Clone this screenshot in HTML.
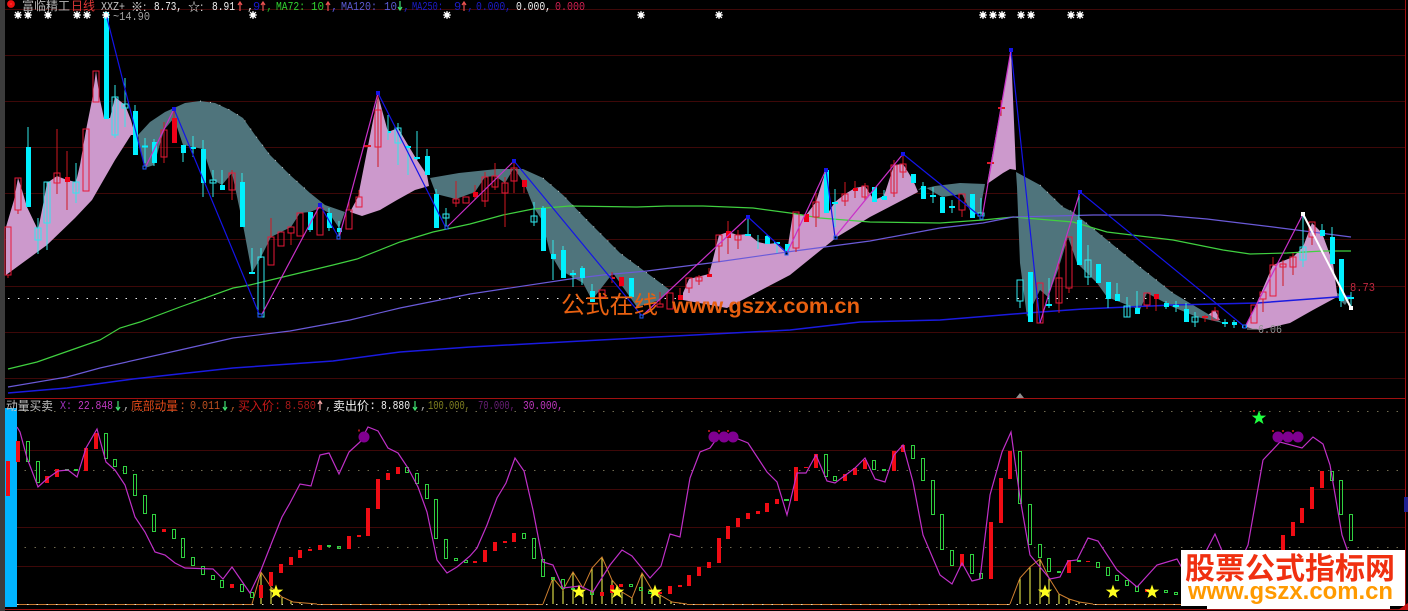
<!DOCTYPE html>
<html><head><meta charset="utf-8"><style>
html,body{margin:0;padding:0;background:#000;width:1408px;height:611px;overflow:hidden}
svg{display:block}
text{font-family:"Liberation Mono","WenQuanYi Zen Hei","Noto Sans CJK SC",monospace;font-size:12px}
.c{font-family:"Liberation Sans","WenQuanYi Zen Hei","Noto Sans CJK SC",sans-serif;font-size:12px}
</style></head><body>
<svg width="1408" height="611" viewBox="0 0 1408 611" xmlns="http://www.w3.org/2000/svg">
<defs>
<polygon id="s" points="0,-7.5 1.8,-2.4 7.2,-2.4 2.9,0.9 4.5,6 0,3 -4.5,6 -2.9,0.9 -7.2,-2.4 -1.8,-2.4"/>
<g id="w"><circle r="2.6" fill="#fff"/><path d="M0-4V4M-4 0H4M-3-3L3 3M-3 3L3-3" stroke="#fff" stroke-width="1.1" fill="none"/></g>
</defs>
<rect width="1408" height="611" fill="#000"/>
<rect x="0" y="0" width="5" height="611" fill="#3c3c3c"/>
<!-- grid -->
<g stroke="#3e0808" stroke-width="1" shape-rendering="crispEdges">
<path d="M5 9.5H1405M5 55.5H1405M5 101.5H1405M5 147.5H1405M5 193.5H1405M5 239.5H1405M5 286.5H1405M5 332.5H1405M5 378.5H1405"/>
<path d="M5 450.5H1405M5 489.5H1405M5 527.5H1405M5 566.5H1405"/>
</g>
<path d="M8 298.5H1350" stroke="#e8e8e8" stroke-dasharray="1.5 8.3" fill="none" shape-rendering="crispEdges"/>
<path d="M5 411.5H1405M5 470.5H1405M5 547.5H1405" stroke="#706a50" stroke-dasharray="1.5 8.3" fill="none" shape-rendering="crispEdges"/>
<path d="M5 398.5H1405M5 609.5H1405M1405.5 0V610" stroke="#a01010" fill="none" stroke-width="1.2" shape-rendering="crispEdges"/>
<rect x="1404" y="497" width="4" height="15" fill="#202090"/>
<!-- pink fills -->
<g fill="#cc99cc">
<polygon points="6,275 6,227 14,200 18,178 22,190 27,207 38,230 43,205 47,183 57,176 67,180 76,182 80,165 86,130 92,100 96,71 100,100 104,118 110,118 115,97 125,105 131,120 135,135 131,135 115,160 92,200 75,218 47,245"/>
<polygon points="350,212 358,197 368,146 378,95 388,132 398,128 408,145 417,160 427,175 429,186 415,190 397,200 380,210 362,216"/>
<polygon points="683,293 689,279 709,274 712,263 719,235 728,232 738,235 748,234 758,242 767,244 777,243 787,252 793,213 806,215 816,202 826,170 828,213 835,202 845,194 855,188 865,186 874,200 884,196 894,165 903,164 913,180 918,192 870,217 837,237 790,275 727,308 683,300"/>
<polygon points="987,184 1011,50 1016,170 1010,169 1003,173"/>
<polygon points="1205,317 1215,310 1220,320 1212,320"/>
<polygon points="1245,327 1255,307 1273,265 1293,257 1303,247 1312,223 1322,233 1333,263 1337,293 1337,297 1313,310 1290,323 1260,330"/>
</g>
<!-- teal fills -->
<g fill="#4f747c">
<polygon points="138,135 150,122 165,112 174,108 185,103 200,101 215,103 230,110 243,118 255,135 270,155 290,175 310,193 325,205 345,212 339,228 329,213 320,208 310,212 300,213 291,227 281,232 271,237 261,257 252,273 243,225 232,173 222,185 213,180 203,149 193,147 183,145 174,118 164,130 154,165 145,168 140,150"/>
<polygon points="430,178 459,173 497,169 523,169 543,178 563,195 587,220 620,253 670,290 660,300 637,307 613,273 592,300 583,283 560,270 550,253 542,220 534,208 525,185 514,168 505,183 495,176 485,177 475,192 456,199 436,194"/>
<polygon points="918,190 935,186 960,183 985,184 982,200 981,213 972,215 962,194 942,197 923,186"/>
<polygon points="1016,172 1040,185 1063,207 1073,212 1140,267 1173,293 1223,323 1197,317 1173,307 1147,293 1140,310 1107,297 1097,283 1077,263 1068,237 1058,270 1048,297 1040,290 1027,317 1020,263 1017,187"/>
<polygon points="1337,293 1350,298 1345,305 1337,297"/>
</g>
<path d="M200 101L215 103L230 110L243 118L255 135L270 155L290 175L310 193M543 178L563 195L587 220L620 253L670 290M1040 185L1063 207L1073 212L1140 267L1173 293" fill="none" stroke="#e8e8e8" stroke-width="1" stroke-dasharray="1 9" opacity=".8"/>
<!-- MAs -->
<g fill="none" stroke-width="1.2">
<polyline stroke="#40d040" points="8,369 37,362 77,348 100,340 120,328 140,322 180,307 233,288 250,285 283,277 333,265 357,259 400,242 433,232 470,224 503,215 533,209 570,206 637,207 667,206 703,206 753,208 790,213 820,218 870,222 940,223 983,220 1013,217 1073,222 1107,232 1173,240 1223,250 1250,254 1287,253 1323,251 1351,251"/>
<polyline stroke="#6a5ad8" points="8,387 67,377 100,368 180,350 233,338 290,331 350,320 400,308 470,294 570,279 603,275 647,271 710,263 787,252 870,241 940,228 983,223 1013,217 1093,215 1160,215 1207,219 1273,227 1351,237"/>
<polyline stroke="#1a1ae0" stroke-width="1.5" points="8,393 67,388 133,379 233,368 333,361 400,352 470,347 600,340 790,330 860,322 940,320 1027,313 1083,309 1173,305 1257,303 1337,297 1351,296"/>
</g>
<!-- cyan wicks -->
<path stroke="#30e8e8" fill="none" shape-rendering="crispEdges" d="M28 127V150M38 218V254M47 182V250M76 163V203M115 85V138M125 78V127M135 105V112M145 138V163M154 139V166M183 150V162M193 136V157M203 140V197M213 170V197M222 170V186M242 173V183M252 248V273M261 248V258M310 230V232M329 208V231M339 221V238M388 115V140M398 123V165M408 145V175M417 131V160M427 149V157M436 189V195M446 208V228M534 202V226M543 206V209M553 240V280M563 246V251M573 270V287M582 266V285M592 284V292M748 218V236M758 235V249M767 235V237M777 242V253M835 189V227M884 190V197M923 182V187M933 187V203M952 200V213M981 198V217M1020 301V308M1049 278V308M1079 193V221M1088 245V285M1108 299V308M1117 283V295M1127 297V317M1137 291V309M1166 301V309M1176 301V312M1186 303V310M1195 312V327M1225 319V327M1234 320V328M1303 214V267M1322 224V231M1332 227V238M1341 301V307M1351 292V308"/>
<!-- cyan bodies filled -->
<path stroke="#00f0ff" fill="none" stroke-width="5" shape-rendering="crispEdges" d="M28.5 147V207M106.5 12V119M135.5 111V155M154.5 142V163M183.5 145V153M203.5 149V183M222.5 185V190M242.5 182V227M310.5 212V230M329.5 213V228M339.5 228V232M427.5 156V175M436.5 194V228M543.5 208V251M553.5 254V259M563.5 250V278M582.5 268V278M592.5 291V302M631.5 278V297M767.5 236V244M787.5 244V251M826.5 170V213M874.5 187V202M884.5 196V200M913.5 174V183M923.5 186V199M942.5 197V213M972.5 194V218M1030.5 272V322M1079.5 220V265M1098.5 264V283M1108.5 282V299M1117.5 294V301M1137.5 308V314M1166.5 303V307M1186.5 309V322M1234.5 322V325M1244.5 325V328M1322.5 230V236M1332.5 237V264M1341.5 259V301"/>
<path stroke="#00f0ff" fill="none" stroke-width="2" shape-rendering="crispEdges" d="M142 146.500H148M190 148H196M249 273H255M388 132H391M405 147H411M414 158H420M570 274H576M745 235H751M774 243H780M832 203H838M881 198H887M930 196H936M949 207H955M1046 305H1052M1173 306H1179M1222 323H1228M1345 298H1354"/>
<!-- cyan outlined -->
<path stroke="#30e8f0" fill="none" shape-rendering="crispEdges" d="M35 228h6v12h-6zM44 182h6v41h-6zM73 182h6v11h-6zM112 97h6v38h-6zM122 104h6v4h-6zM210 180h6v3h-6zM258 257h6v60h-6zM395 128h6v15h-6zM443 214h6v4h-6zM531 216h6v6h-6zM978 213h6v3h-6zM1017 280h6v21h-6zM1085 260h6v17h-6zM1124 306h6v11h-6zM1192 317h6v5h-6zM1300 247h6v13h-6z"/>
<!-- red wicks -->
<path stroke="#d01820" fill="none" shape-rendering="crispEdges" d="M8 275V278M18 210V214M57 129V194M67 151V210M164 122V163M174 108V118M232 170V200M271 218V237M291 233V245M349 200V210M359 190V197M378 93V167M456 181V207M475 185V200M485 172V207M495 163V190M505 177V227M514 160V193M524 187V193M612 272V283M660 292V304M680 288V295M689 288V293M699 275V285M709 268V274M719 246V262M728 221V254M738 230V249M796 248V252M816 193V227M845 182V206M855 181V198M865 183V200M894 160V197M903 155V178M962 210V217M1001 100V116M1059 263V313M1069 288V293M1147 305V309M1156 299V311M1205 315V322M1215 307V311M1263 299V312M1273 257V265M1283 260V286M1293 253V275M1312 237V245"/>
<!-- red filled -->
<path stroke="#f00018" fill="none" stroke-width="5" shape-rendering="crispEdges" d="M67.500 177V182M174.500 118V143M475.500 192V197M524.500 180V187M621.500 277V286M680.500 295V300M709.500 274V277M728.500 231V238M806.500 214V222M855.500 188V191M1156.500 294V299"/>
<path stroke="#e01828" stroke-width="2" fill="none" shape-rendering="crispEdges" d="M364 146H371M987 163H994M998 108H1005M612 278H615M1202 317H1208"/>
<!-- red outlined -->
<path stroke="#e81838" fill="none" shape-rendering="crispEdges" d="M5 227h6v48h-6zM15 178h6v32h-6zM54 173h6v10h-6zM83 129h6v62h-6zM93 71h6v31h-6zM161 130h6v27h-6zM229 173h6v17h-6zM268 237h6v28h-6zM278 232h6v14h-6zM288 227h6v6h-6zM297 213h6v23h-6zM317 208h6v27h-6zM346 210h6v19h-6zM356 197h6v10h-6zM375 110h6v37h-6zM453 199h6v4h-6zM463 197h6v6h-6zM482 177h6v24h-6zM492 176h6v11h-6zM502 183h6v10h-6zM511 168h6v13h-6zM599 290h6v7h-6zM657 304h6v3h-6zM667 293h6v16h-6zM686 278h6v10h-6zM696 277h6v4h-6zM716 235h6v11h-6zM735 235h6v5h-6zM793 212h6v36h-6zM813 202h6v15h-6zM842 194h6v7h-6zM862 186h6v11h-6zM891 165h6v28h-6zM900 164h6v8h-6zM959 194h6v16h-6zM1037 283h6v40h-6zM1056 278h6v25h-6zM1066 237h6v51h-6zM1144 293h6v12h-6zM1212 311h6v9h-6zM1251 305h6v18h-6zM1260 292h6v7h-6zM1270 265h6v31h-6zM1280 264h6v3h-6zM1290 257h6v10h-6zM1309 222h6v15h-6z"/>
<!-- zigzag -->
<g fill="none" stroke-width="1.2">
<path stroke="#1414e8" d="M106 14L145 168M174 109L260 316M320 205L339 238M378 93L446 228M514 161L642 316M748 217L787 253M826 170L835 237M903 154L981 217M1011 50L1040 323M1080 192L1245 327"/>
<path stroke="#c830c8" d="M145 168L174 109M261 316L320 205M339 238L378 93M446 228L514 161M642 316L748 217M787 253L826 170M835 237L903 154M982 218L1011 50M1040 323L1080 192M1245 327L1303 214"/>
<path stroke="#fff" stroke-width="2" d="M1303 214L1351 308"/>
</g>
<g fill="#1414e8" shape-rendering="crispEdges">
<rect x="172" y="107" width="4" height="4"/><rect x="376" y="91" width="4" height="4"/><rect x="512" y="159" width="4" height="4"/><rect x="746" y="215" width="4" height="4"/><rect x="824" y="168" width="4" height="4"/><rect x="901" y="152" width="4" height="4"/><rect x="1009" y="48" width="4" height="4"/><rect x="1078" y="190" width="4" height="4"/><rect x="318" y="203" width="4" height="4"/>
</g>
<g fill="#000" stroke="#2060ff" shape-rendering="crispEdges">
<rect x="143" y="166" width="3" height="3"/><rect x="258" y="314" width="4" height="3"/><rect x="337" y="236" width="3" height="3"/><rect x="445" y="226" width="3" height="3"/><rect x="640" y="315" width="3" height="3"/><rect x="785" y="252" width="3" height="3"/><rect x="834" y="236" width="3" height="3"/><rect x="980" y="216" width="3" height="3"/><rect x="1243" y="325" width="3" height="3"/>
</g>
<rect x="1301" y="212" width="4" height="4" fill="#fff"/><rect x="1349" y="306" width="4" height="4" fill="#fff"/>
<!-- white markers -->
<use href="#w" x="18" y="15"/><use href="#w" x="28" y="15"/><use href="#w" x="48" y="15"/><use href="#w" x="77" y="15"/><use href="#w" x="87" y="15"/><use href="#w" x="106" y="15"/><use href="#w" x="253" y="15"/><use href="#w" x="447" y="15"/><use href="#w" x="641" y="15"/><use href="#w" x="719" y="15"/><use href="#w" x="983" y="15"/><use href="#w" x="993" y="15"/><use href="#w" x="1002" y="15"/><use href="#w" x="1021" y="15"/><use href="#w" x="1031" y="15"/><use href="#w" x="1071" y="15"/><use href="#w" x="1080" y="15"/>
<!-- top header -->
<circle cx="11" cy="4" r="2.2" fill="#ff9090" stroke="#f01010" stroke-width="3.4"/>
<text class="c" x="22" y="10" fill="#b8b8b8" textLength="48" lengthAdjust="spacingAndGlyphs">富临精工</text>
<text class="c" x="71" y="10" fill="#e03838" textLength="24" lengthAdjust="spacingAndGlyphs">日线</text>
<text x="101" y="10" fill="#c0c0c0" textLength="24" lengthAdjust="spacingAndGlyphs">XXZ+</text>
<text class="c" x="131" y="11" fill="#e8e8e8">※:</text>
<text x="154" y="10" fill="#f0f0f0" textLength="28" lengthAdjust="spacingAndGlyphs">8.73,</text>
<text class="c" x="188" y="11" fill="#e8e8e8">☆:</text>
<text x="212" y="10" fill="#f0f0f0" textLength="23" lengthAdjust="spacingAndGlyphs">8.91</text>
<text x="247" y="10" fill="#d0d0d0">,</text>
<text x="253" y="10" fill="#1818d0">9</text><text x="266" y="10" fill="#20a020">,</text>
<text x="276" y="10" fill="#30d030" textLength="29" lengthAdjust="spacingAndGlyphs">MA72:</text>
<text x="311" y="10" fill="#30d030" textLength="13" lengthAdjust="spacingAndGlyphs">10</text><text x="331" y="10" fill="#5050c8">,</text>
<text x="341" y="10" fill="#5a5ad0" textLength="36" lengthAdjust="spacingAndGlyphs">MA120:</text>
<text x="384" y="10" fill="#5a5ad0" textLength="13" lengthAdjust="spacingAndGlyphs">10</text><text x="403" y="10" fill="#2020b0">,</text>
<text x="412" y="10" fill="#1c1cc8" textLength="31" lengthAdjust="spacingAndGlyphs">MA250:</text>
<text x="454" y="10" fill="#1c1cc8">9</text><text x="467" y="10" fill="#1818a0">,</text>
<text x="476" y="10" fill="#1c1cc8" textLength="35" lengthAdjust="spacingAndGlyphs">0.000,</text>
<text x="516" y="10" fill="#f0f0f0" textLength="35" lengthAdjust="spacingAndGlyphs">0.000,</text>
<text x="555" y="10" fill="#d02050" textLength="30" lengthAdjust="spacingAndGlyphs">0.000</text>
<g fill="none" stroke-width="1.2">
<path stroke="#e85050" d="M240 11V2M238 5L240 2L242 5M263 11V2M261 5L263 2L265 5M328 11V2M326 5L328 2L330 5M464 11V2M462 5L464 2L466 5"/>
<path stroke="#40e070" d="M400 1V10M398 7L400 10L402 7"/>
<path stroke="#f0a0a0" d="M320 410V401M318 404L320 401L322 404"/>
<path stroke="#40e070" d="M118 401V410M116 407L118 410L120 407M225 401V410M223 407L225 410L227 407M415 401V410M413 407L415 410L417 407"/>
</g>
<text x="113" y="20" fill="#a0a0a0" textLength="37" lengthAdjust="spacingAndGlyphs">~14.90</text>
<text x="1350" y="291" fill="#c02840" textLength="25" lengthAdjust="spacingAndGlyphs">8.73</text>
<path d="M1247 329H1257" stroke="#a0a0a0"/>
<text x="1258" y="333" fill="#909090" textLength="24" lengthAdjust="spacingAndGlyphs">6.06</text>
<polygon points="1020,393 1024,398 1016,398" fill="#909090"/>
<!-- watermark -->
<text class="c" x="561" y="313" style="font-size:24px" fill="#e86010" textLength="97" lengthAdjust="spacingAndGlyphs">公式在线</text>
<text x="672" y="313" style="font:bold 21.500px 'Liberation Sans',sans-serif" fill="#e86010" textLength="188" lengthAdjust="spacingAndGlyphs">www.gszx.com.cn</text>
<!-- lower panel -->
<rect x="5" y="408" width="12" height="199" fill="#00b4ff"/>
<path d="M17 604.500H252M317 604.500H543M687 604.500H1010M1093 604.500H1200" stroke="#c87830" fill="none" shape-rendering="crispEdges"/>
<path d="M17 604.500H1200" stroke="#e8e0c0" stroke-dasharray="1.5 8.3" fill="none" shape-rendering="crispEdges"/>
<text class="c" x="6" y="410" fill="#c0c0c0" textLength="47" lengthAdjust="spacingAndGlyphs">动量买卖</text>
<text x="60" y="409" fill="#a030c0" textLength="12" lengthAdjust="spacingAndGlyphs">X:</text>
<text x="78" y="409" fill="#c038c0" textLength="35" lengthAdjust="spacingAndGlyphs">22.848</text>
<text x="123" y="409" fill="#a0a0a0">,</text>
<text class="c" x="131" y="410" fill="#e04818" textLength="47" lengthAdjust="spacingAndGlyphs">底部动量</text><text x="179" y="409" fill="#c04820">:</text>
<text x="190" y="409" fill="#c05020" textLength="30" lengthAdjust="spacingAndGlyphs">0.011</text>
<text x="230" y="409" fill="#a05020">,</text>
<text class="c" x="238" y="410" fill="#c81818" textLength="36" lengthAdjust="spacingAndGlyphs">买入价</text><text x="274" y="409" fill="#b01010">:</text>
<text x="285" y="409" fill="#a81818" textLength="31" lengthAdjust="spacingAndGlyphs">8.580</text>
<text x="325" y="409" fill="#a0a0a0">,</text>
<text class="c" x="333" y="410" fill="#f0f0f0" textLength="36" lengthAdjust="spacingAndGlyphs">卖出价</text><text x="369" y="409" fill="#e0e0e0">:</text>
<text x="381" y="409" fill="#f0f0f0" textLength="29" lengthAdjust="spacingAndGlyphs">8.880</text>
<text x="420" y="409" fill="#a0a0a0">,</text>
<text x="428" y="409" fill="#808020" textLength="42" lengthAdjust="spacingAndGlyphs">100.000,</text>
<text x="478" y="409" fill="#6a1f78" textLength="37" lengthAdjust="spacingAndGlyphs">70.000,</text>
<text x="523" y="409" fill="#c038c0" textLength="40" lengthAdjust="spacingAndGlyphs">30.000,</text>
<!-- yellow vertical bars -->
<path stroke="#ffff50" fill="none" shape-rendering="crispEdges" d="M261 572V604M271 587V604M282 597V604M291 601V604M300 603V604M553 578V604M563 590V604M573 572V604M583 590V604M592 568V604M602 557V604M612 580V604M622 592V604M632 598V604M642 573V604M652 590V604M660 595V604M671 601V604M680 603V604M1020 578V604M1030 567V604M1040 559V604M1049 578V604M1059 594V604M1069 599V604M1079 602V604"/>
<path stroke="#d08030" fill="none" d="M252 604L261 572L271 587L282 597L293 602L317 604M543 604L553 578L563 590L573 572L583 588L592 568L602 557L612 580L622 592L632 598L642 573L652 590L660 595L672 602L687 604M1010 604L1020 578L1030 567L1040 559L1049 578L1059 594L1069 599L1079 602L1093 604"/>
<!-- lower red bodies -->
<path stroke="#f00c14" stroke-width="4" fill="none" shape-rendering="crispEdges" d="M8 461V496M18 441V462M47 476V483M57 469V477M86 448V471M96 433V449M164 529V532M232 584V588M261 585V598M271 572V586M281 564V573M291 557V565M300 550V558M310 549V551M320 545V550M349 536V549M359 535V537M368 508V536M378 479V509M388 473V480M398 467V474M475 561V563M485 550V562M495 542V551M505 541V543M514 533V542M602 592V596M612 585V593M621 584V587M660 592V594M670 586V594M680 585V587M689 575V586M699 567V576M709 562V568M719 538V563M728 526V539M738 518V527M748 513V519M758 511V514M767 503V512M777 499V504M796 467V501M806 467V468M816 454V468M845 474V481M855 468V475M865 460V469M894 451V471M903 445V452M962 554V566M991 522V579M1001 478V523M1010 451V479M1069 560V573M1088 561V562M1147 589V592M1283 535V552M1293 522V536M1302 508V523M1312 487V509M1322 471V488"/>
<!-- lower green bodies -->
<path stroke="#30d040" fill="none" shape-rendering="crispEdges" d="M26.500 441.500h3v20h-3zM36.500 461.500h3v21h-3zM104.500 433.500h3v25h-3zM113.500 459.500h3v7h-3zM123.500 466.500h3v7h-3zM133.500 474.500h3v21h-3zM143.500 495.500h3v18h-3zM152.500 514.500h3v17h-3zM172.500 529.500h3v9h-3zM181.500 538.500h3v19h-3zM191.500 557.500h3v8h-3zM201.500 566.500h3v8h-3zM211.500 575.500h3v4h-3zM220.500 580.500h3v7h-3zM240.500 584.500h3v7h-3zM250.500 592.500h3v5h-3zM337.500 546.500h3v2h-3zM405.500 467.500h3v5h-3zM415.500 473.500h3v10h-3zM425.500 484.500h3v14h-3zM434.500 499.500h3v39h-3zM444.500 539.500h3v19h-3zM454.500 558.500h3v2h-3zM464.500 560.500h3v2h-3zM522.500 533.500h3v5h-3zM532.500 538.500h3v20h-3zM541.500 559.500h3v17h-3zM551.500 577.500h3v2h-3zM561.500 579.500h3v9h-3zM571.500 588.500h3v1h-3zM590.500 591.500h3v3h-3zM629.500 584.500h3v2h-3zM639.500 587.500h3v3h-3zM648.500 591.500h3v2h-3zM824.500 454.500h3v22h-3zM833.500 476.500h3v4h-3zM872.500 460.500h3v9h-3zM911.500 445.500h3v13h-3zM921.500 458.500h3v22h-3zM931.500 480.500h3v34h-3zM940.500 514.500h3v35h-3zM950.500 550.500h3v15h-3zM970.500 554.500h3v19h-3zM979.500 573.500h3v5h-3zM1018.500 451.500h3v52h-3zM1028.500 504.500h3v40h-3zM1038.500 544.500h3v13h-3zM1047.500 558.500h3v13h-3zM1096.500 562.500h3v5h-3zM1106.500 567.500h3v8h-3zM1115.500 575.500h3v5h-3zM1125.500 580.500h3v5h-3zM1135.500 586.500h3v5h-3zM1164.500 590.500h3v2h-3zM1174.500 592.500h3v2h-3zM1330.500 471.500h3v9h-3zM1339.500 480.500h3v34h-3zM1349.500 514.500h3v26h-3z"/>
<path stroke="#30d040" stroke-width="2" fill="none" shape-rendering="crispEdges" d="M65 470H69M74 470H78M327 546H331M784 500H789M882 470H886M1057 572H1061M1077 561H1081"/>
<!-- X line -->
<polyline fill="none" stroke="#c030c8" stroke-width="1.2" points="17,427 20,432 27,458 38,487 48,478 58,471 68,470 77,477 86,448 97,429 106,462 115,470 125,485 135,517 145,532 155,552 165,555 175,563 185,568 213,569 223,579 232,567 250,593 261,570 272,542 282,517 290,503 300,484 311,486 320,455 329,453 339,474 349,452 360,442 368,427 378,431 388,448 398,453 408,468 418,487 427,512 437,560 447,573 457,567 470,556 477,548 487,525 497,498 506,483 515,458 524,471 533,510 543,562 553,565 563,588 580,586 593,592 610,565 622,550 632,556 650,578 661,566 670,534 680,537 690,478 700,452 710,448 718,437 738,439 748,443 767,472 777,482 787,515 797,473 806,473 816,455 827,481 835,483 855,468 865,458 875,479 885,482 894,455 903,445 913,482 923,535 940,575 952,584 962,563 972,581 980,579 990,495 1002,452 1011,432 1020,498 1030,555 1050,579 1060,577 1068,561 1077,560 1088,538 1098,541 1117,570 1137,587 1157,565 1177,559 1190,582 1215,534 1233,577 1248,545 1263,460 1280,442 1302,448 1313,437 1323,444 1330,465 1342,535 1348,552 1356,580"/>
<!-- circles -->
<g fill="#800090">
<circle cx="364" cy="437" r="5.500"/><circle cx="714" cy="437" r="5.500"/><circle cx="724" cy="437" r="5.500"/><circle cx="733" cy="437" r="5.500"/><circle cx="1278" cy="437" r="5.500"/><circle cx="1288" cy="437" r="5.500"/><circle cx="1298" cy="437" r="5.500"/>
</g>
<path stroke="#a01818" stroke-width="2" fill="none" shape-rendering="crispEdges" d="M358 430.500h2M708 431h2M718 431h2M727 431h2M1272 431h2M1282 431h2M1292 431h2M1253 411h2"/>
<!-- stars -->
<g fill="#ffff20">
<use href="#s" x="276" y="592"/><use href="#s" x="579" y="592"/><use href="#s" x="617" y="592"/><use href="#s" x="655" y="592"/><use href="#s" x="1045" y="592"/><use href="#s" x="1113" y="592"/><use href="#s" x="1152" y="592"/>
</g>
<use href="#s" x="1259" y="418" fill="#20ff40"/>
<!-- corner logo -->
<rect x="1181" y="550" width="224" height="56" fill="#fff"/>
<rect x="1207" y="606" width="183" height="3" fill="#fff"/>
<polygon points="1408,603 1408,610 1398,610" fill="#c01010"/>
<text x="1185" y="579" style="font:bold 30px 'Noto Sans CJK SC','WenQuanYi Zen Hei',sans-serif" fill="#f03010" textLength="210" lengthAdjust="spacingAndGlyphs">股票公式指标网</text>
<text x="1188" y="599" style="font:bold 24px 'Liberation Sans',sans-serif" fill="#ff9a00" textLength="205" lengthAdjust="spacingAndGlyphs">www.gszx.com.cn</text>
</svg>
</body></html>
